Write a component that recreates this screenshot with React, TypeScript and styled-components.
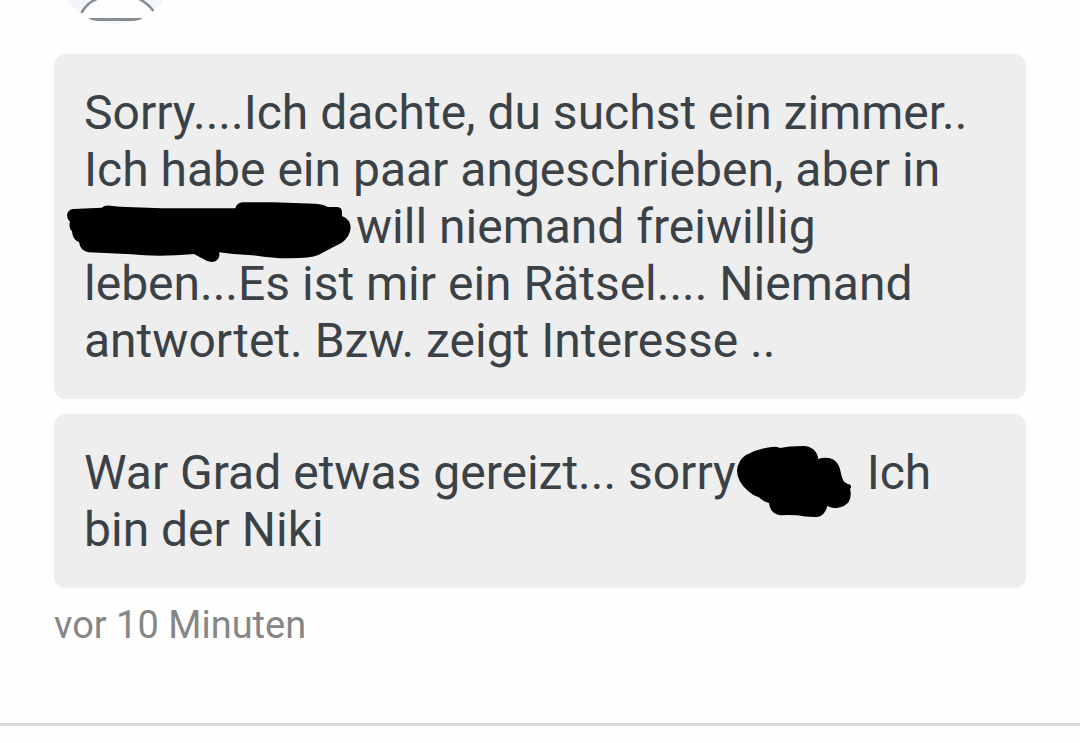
import styled, { createGlobalStyle } from "styled-components";

const GlobalStyle = createGlobalStyle`
  body {
    margin: 0;
    background: #fefefe;
    font-family: Roboto, "Liberation Sans", sans-serif;
  }
`;

const Conversation = styled.main`
  display: flex;
  flex-direction: column;
  padding: 0 54px 72px;
  border-bottom: 3px solid #dadada;
`;

const Avatar = styled.svg`
  display: block;
  width: 124px;
  height: 24px;
  margin-bottom: 30px;
`;

const Messages = styled.div`
  display: flex;
  flex-direction: column;
  gap: 15px;
`;

const Bubble = styled.p`
  margin: 0;
  padding: 30px;
  border-radius: 12px;
  background: #eeeeee;
  color: #3a4147;
  font-size: 48px;
  line-height: 57px;
`;

const Scribble = styled.svg<{ $width: number }>`
  width: ${(p) => p.$width}px;
  height: 57px;
  vertical-align: top;
  overflow: visible;
`;

const Time = styled.time`
  margin-top: 12px;
  color: #868686;
  font-size: 38px;
  line-height: 51px;
`;

export default function App() {
  return (
    <>
      <GlobalStyle />
      <Conversation>
        <Avatar viewBox="0 0 124 24" aria-hidden="true">
          <circle cx="61" cy="-37" r="61" fill="#f2f5f9" />
          <path d="M27.500 13C31 6 37 1 45 -2H83C91 1 96 6 99.500 11L88 19H35Z" fill="#fefefe" />
          <path
            d="M27.500 13C31 6 37 1 45 -2M83 -2C90 1 95 5 99.500 11"
            fill="none"
            stroke="#878c91"
            strokeWidth="2.500"
          />
          <path d="M34 18H89Q85 21 80 21H43Q38 21 34 18Z" fill="#878c91" />
        </Avatar>
        <Messages>
          <Bubble>
            Sorry....Ich dachte, du suchst ein zimmer.. Ich habe ein paar
            angeschrieben, aber in{" "}
            <Scribble $width={272} viewBox="72 24 816 171" aria-hidden="true">
              <path d="M40 57L125 53Q135 45 150 47L180 50L305 55H526Q530 38 548 37H640L765 41Q795 43 803 51H832Q846 53 846 66V78Q872 88 872 114Q869 142 845 158L775 195Q750 205 690 205Q630 204 590 197L520 192L478 187V198Q475 215 455 216Q443 216 430 207L402 192Q340 197 300 197Q250 197 215 193L85 187Q60 181 57 156Q38 151 36 124Q25 115 30 95Q21 87 21 75Q24 59 40 57Z" />
            </Scribble>
            will niemand freiwillig leben...Es ist mir ein Rätsel.... Niemand
            antwortet. Bzw. zeigt Interesse ..
          </Bubble>
          <Bubble>
            War Grad etwas gereizt... sorry
            <Scribble $width={119} viewBox="48 42 357 171" aria-hidden="true">
              <path d="M51 122Q54 90 78 75Q110 57 155 51Q170 49 180 54Q205 48 250 48Q289 50 295 87Q315 79 337 87Q357 97 362 126Q366 148 373 156L383 162Q394 162 393 173L390 177Q396 199 386 216Q373 232 350 234Q332 234 322 227Q316 257 292 261Q260 262 230 256Q200 254 180 256Q150 250 147 219Q128 214 117 202Q100 198 82 181Q52 154 51 122Z" />
            </Scribble>{" "}
            Ich bin der Niki
          </Bubble>
        </Messages>
        <Time>vor 10 Minuten</Time>
      </Conversation>
    </>
  );
}
